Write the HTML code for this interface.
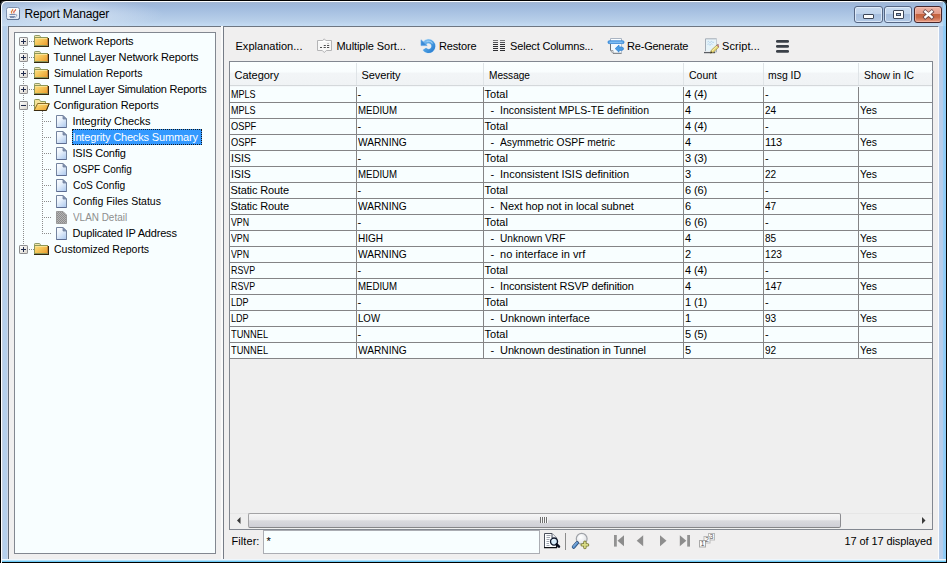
<!DOCTYPE html>
<html>
<head>
<meta charset="utf-8">
<title>Report Manager</title>
<style>
html,body{margin:0;padding:0;}
body{width:947px;height:563px;overflow:hidden;position:relative;background:#000;font-family:"Liberation Sans",sans-serif;font-size:11px;color:#000;}
.abs{position:absolute;}
#win{position:absolute;left:0;top:0;width:947px;height:563px;background:#b7cfe9;overflow:hidden;}
#frameL{left:0;top:26px;width:8px;height:537px;background:linear-gradient(to right,#000 0,#000 1px,#fbfdff 1px,#fbfdff 2px,#c6d1e2 2px,#c6d1e2 3px,#b4d0ee 3px,#b6d0ec 7px,#cdd8ea 7px,#cdd8ea 8px);}
#frameR{left:938px;top:26px;width:9px;height:537px;background:linear-gradient(to right,#b9cde9 0,#b9cde9 1px,#b9cde9 1px,#b4cbea 5px,#93cdf6 5px,#8ccaf6 8px,#000 8px,#000 9px);}
#title{left:0;top:0;width:947px;height:26px;background:linear-gradient(to bottom,#000 0,#000 1px,#fbfdff 1px,#fbfdff 2px,#a4b6d1 2px,#9eb7d9 4px,#a0badd 7px,#aac3e3 13px,#b8cfe9 21px,#c5dcf3 26px);}
#titleglow{left:2px;top:2px;width:200px;height:24px;background:radial-gradient(ellipse 100px 16px at 62px 12px,rgba(232,240,250,.7),rgba(232,240,250,0));}
#frameB{left:0;top:559px;width:947px;height:4px;background:linear-gradient(to bottom,#eef6fc 0,#eef6fc 1px,#b6e1f8 1px,#b6e1f8 2px,#6ccaf6 2px,#6ccaf6 3px,#000 3px,#000 4px);}
#content{left:8px;top:26px;width:930px;height:533px;background:#f0efef;}
.t{position:absolute;white-space:pre;line-height:14px;height:14px;transform-origin:0 0;}
.vdot{width:1px;background:repeating-linear-gradient(to bottom,#8c8c8c 0,#8c8c8c 1px,transparent 1px,transparent 2px);}
.hdot{height:1px;background:repeating-linear-gradient(to right,#8c8c8c 0,#8c8c8c 1px,transparent 1px,transparent 2px);}
.cbtn{border:1px solid #566684;border-radius:3px;background:linear-gradient(to bottom,#c9dbf0 0,#bfd3ec 48%,#a7bfdf 50%,#b2c9e6 100%);box-shadow:inset 0 0 0 1px rgba(232,242,252,.75);}
#frame{left:0;top:0;width:945px;height:580px;border:1px solid #000;border-radius:6px 6px 0 0;box-shadow:0 0 0 12px #000,inset 1px 1px 0 0 #fbfdff;pointer-events:none;}

</style>
</head>
<body>
<svg width="0" height="0" style="position:absolute">
<defs>
<linearGradient id="gbox" x1="0" y1="0" x2="1" y2="1"><stop offset="0" stop-color="#ffffff"/><stop offset="1" stop-color="#d9d5cc"/></linearGradient>
<linearGradient id="gfold" x1="0" y1="0" x2="1" y2="0.8"><stop offset="0" stop-color="#fbe089"/><stop offset="0.45" stop-color="#f6c95c"/><stop offset="1" stop-color="#eca233"/></linearGradient>
<linearGradient id="gfile" x1="0" y1="0" x2="0.7" y2="1"><stop offset="0" stop-color="#ffffff"/><stop offset="0.45" stop-color="#e9f2fc"/><stop offset="1" stop-color="#b5cff0"/></linearGradient>
<linearGradient id="grest" x1="0" y1="0" x2="1" y2="1"><stop offset="0" stop-color="#7dbdf0"/><stop offset="0.5" stop-color="#4a9ce0"/><stop offset="1" stop-color="#2b7fd2"/></linearGradient>
<radialGradient id="glens" cx="0.4" cy="0.35" r="0.7"><stop offset="0" stop-color="#ffffff"/><stop offset="1" stop-color="#dcdfe4"/></radialGradient>
<symbol id="plus" viewBox="0 0 9 9"><rect x="0.5" y="0.5" width="8" height="8" rx="0.6" fill="url(#gbox)" stroke="#8e8e90"/><path d="M2 4.5H7M4.5 2V7" stroke="#1f2b4d" stroke-width="1"/></symbol>
<symbol id="minus" viewBox="0 0 9 9"><rect x="0.5" y="0.5" width="8" height="8" rx="0.6" fill="url(#gbox)" stroke="#8e8e90"/><path d="M2 4.5H7" stroke="#1f2b4d" stroke-width="1"/></symbol>
<symbol id="fclosed" viewBox="0 0 17 16">
 <path d="M1.5 4.5 V3.2 Q1.5 2.5 2.2 2.5 H6.3 Q7 2.5 7.2 3.2 L7.6 4.5 Z" fill="#f3e7ac" stroke="#8f9a68" stroke-width="1"/>
 <rect x="1.5" y="4.5" width="13" height="8" fill="url(#gfold)" stroke="#8d9858" stroke-width="1"/>
 <path d="M2.5 5.5 H14" stroke="#fbe9a0" stroke-width="1" opacity="0.8"/>
 <path d="M14.5 5 V12.5" stroke="#c8863a" stroke-width="1"/>
 <path d="M1 13.5 H16 M15.5 5 V14" fill="none" stroke="#33280f" stroke-width="1"/>
</symbol>
<symbol id="fopen" viewBox="0 0 17 16">
 <path d="M1.5 13 V3.3 Q1.5 2.5 2.3 2.5 H6.3 L7.6 4.5 H12.5 V7" fill="#f4e49c" stroke="#8d9858" stroke-width="1"/>
 <path d="M4.6 6.5 H16.2 L13.2 13.5 H1.2 Z" fill="url(#gfold)" stroke="#8a6a24" stroke-width="1" stroke-linejoin="round"/>
 <path d="M5.2 7.5 H14.8" stroke="#fdeeb4" stroke-width="1" opacity="0.8"/>
 <path d="M1 13.5 H13.4 L16.2 6.8" fill="none" stroke="#3a2c10" stroke-width="1"/>
</symbol>
<symbol id="file" viewBox="0 0 14 16">
 <path d="M1.5 2.5 H8 L11.5 6 V14.5 H1.5 Z" fill="url(#gfile)" stroke="#74849f" stroke-width="1"/>
 <path d="M8 2.5 V6 H11.5 Z" fill="#7f90b0" stroke="#74849f" stroke-width="0.8"/>
 <path d="M1.5 14.5 H11.5" stroke="#5c6c92" stroke-width="1"/>
</symbol>
<pattern id="hatch" width="2" height="2" patternUnits="userSpaceOnUse"><rect width="2" height="2" fill="#b5b5b5"/><rect width="1" height="1" fill="#8d8d8d"/><rect x="1" y="1" width="1" height="1" fill="#8d8d8d"/></pattern>
<symbol id="fdis" viewBox="0 0 14 16">
 <path d="M1.5 2.5 H8 L11.5 6 V14.5 H1.5 Z" fill="url(#hatch)" stroke="#9a9a9a" stroke-width="1"/>
</symbol>
<symbol id="isort" viewBox="0 0 17 16">
 <path d="M1.5 2.5 H6.8 L8.3 0.8 L9.8 2.5 H15.5 V12.5 H10.3 L8.3 14.6 L6.3 12.5 H1.5 Z" fill="#f7f7f7" stroke="#b4b4b6" stroke-width="1" stroke-linejoin="round"/>
 <path d="M2.5 3.5 H14.5" stroke="#ffffff"/>
 <path d="M4 9.5H6M7.6 9.5H9.8M11 9.5H13.2M7.8 7.5H9.8M11 7.5H13.2" stroke="#4e4e50" stroke-width="1.1"/>
 <path d="M11.4 5.5H12.8" stroke="#a8a8aa" stroke-width="1"/>
</symbol>
<symbol id="irestore" viewBox="0 0 16 16">
 <path d="M4.6 5.2 A4.9 4.9 0 1 1 4.4 10.9" fill="none" stroke="#d4e8f8" stroke-width="5"/>
 <path d="M4.6 5.2 A4.9 4.9 0 1 1 4.4 10.9" fill="none" stroke="url(#grest)" stroke-width="3.9"/>
 <path d="M6.5 3.6 A4.9 4.9 0 0 1 12.6 5.5" fill="none" stroke="#9fd0f6" stroke-width="1.2" opacity="0.9"/>
 <path d="M1 1.8 L1 7.6 L7.2 7.6 Z" fill="#3b8bd8" stroke="#5aa4e6" stroke-width="0.6"/>
</symbol>
<symbol id="icols" viewBox="0 0 13 12">
 <path d="M0 0.5H5M7 0.5H12" stroke="#77777a" stroke-width="1"/>
 <path d="M0 2.5H5M7 2.5H12" stroke="#55555a" stroke-width="1"/>
 <path d="M0 4.5H5M0 6.5H5M0 8.5H5M0 10.5H5M7 4.5H12M7 6.5H12M7 8.5H12M7 10.5H12" stroke="#2e2e32" stroke-width="1"/>
</symbol>
<symbol id="iregen" viewBox="0 0 18 16">
 <path d="M3.5 3 V0.5 H14.5 V3" fill="#fafdff" stroke="#aab4c2"/>
 <rect x="1" y="2.8" width="16" height="2.8" rx="1.2" fill="#4f9fe6" stroke="#3584d6" stroke-width="0.8"/>
 <path d="M2.5 4.2 H15.5" stroke="#9fd0f8" stroke-width="0.9"/>
 <path d="M3.5 6 V12.5 L6 15.3 H14.5 V6" fill="#f3f9fe" stroke="#6d7075" stroke-width="1"/>
 <path d="M14.5 6 V15.3" stroke="#b8c2d0" stroke-width="1"/>
 <path d="M3.7 12.5 H6 V15" fill="#ffffff" stroke="#8a8d92" stroke-width="0.8"/>
 <path d="M8.2 10.6 L12 7 V9 H14.6 Q16.6 9.2 16.6 10.8 Q16.4 12.4 14.4 12.4 H12 V14.2 Z" fill="#4a9ce4" stroke="#2f7fd0" stroke-width="0.7" stroke-linejoin="round"/>
</symbol>
<symbol id="iscript" viewBox="0 0 16 16">
 <path d="M2.5 0.8 H13.5 V14 H2.5 Z" fill="#e6f3f9" stroke="#a4acb6" stroke-width="1"/>
 <path d="M13.5 1 V9" stroke="#c4ccd6"/>
 <path d="M4.5 4 q1 -1.5 1.6 0 t1.6 0 t1.6 0 t1.6 0 M4.5 6.5 q1 -1.5 1.6 0 t1.6 0 t1.6 0" fill="none" stroke="#a9cdea" stroke-width="0.9"/>
 <path d="M1 14.5 H12" stroke="#4e5258" stroke-width="1.4"/>
 <path d="M1.3 13.6 H8" stroke="#ffffff" stroke-width="0.8"/>
 <path d="M7.3 15.2 L8.4 12 L14 7 L16 9 L10.4 14.2 Z" fill="#e8d774" stroke="#9a8a3a" stroke-width="0.6"/>
 <path d="M9.2 12.8 L14.6 7.8" stroke="#fbf3b4" stroke-width="0.9"/>
 <path d="M13.8 7.2 L15 6.2 L16.6 8 L15.6 9 Z" fill="#e89aa0" stroke="#5a4a4a" stroke-width="0.5"/>
 <path d="M7.3 15.2 L8 13.2 L9.2 14.5 Z" fill="#15151a"/>
</symbol>
<symbol id="iburger" viewBox="0 0 14 13">
 <rect x="0" y="0" width="13" height="2.8" rx="1.3" fill="#3b4048"/>
 <rect x="0" y="5" width="13" height="2.8" rx="1.3" fill="#3b4048"/>
 <rect x="0" y="10" width="13" height="2.8" rx="1.3" fill="#3b4048"/>
</symbol>
<symbol id="ifind" viewBox="0 0 18 17">
 <path d="M1.5 1.5 H9 L13.5 6 V15.5 H1.5 Z" fill="#fdfeff" stroke="#4a4f5a"/>
 <path d="M9 1.5 V6 H13.5" fill="#eef1f6" stroke="#4a4f5a"/>
 <path d="M1 15.7 H14 M13.6 6.5 V16" stroke="#0c0c10" stroke-width="1.3"/>
 <path d="M3.5 3.5H7.5M3.5 5.5H7M3.5 7.5H6.5M3.5 9.5H6M3.5 11.5H6M3.5 13.5H6.5" stroke="#a0a6b0"/>
 <circle cx="11" cy="9.6" r="3.5" fill="#d6ebf9" stroke="#0d1428" stroke-width="1.4"/>
 <path d="M9.3 8.6 Q10 7.4 11.3 7.4" fill="none" stroke="#ffffff" stroke-width="0.9"/>
 <path d="M13.7 12.4 L16 14.7" stroke="#080c1c" stroke-width="2.5" stroke-linecap="round"/>
</symbol>
<symbol id="izoom" viewBox="0 0 19 18">
 <circle cx="10.7" cy="6.8" r="5.4" fill="url(#glens)" stroke="#9fa2a8" stroke-width="1.2"/>
 <path d="M6.2 10.8 L2.6 15" stroke="#2c4f7c" stroke-width="3.6" stroke-linecap="round"/>
 <path d="M6.2 10.8 L2.6 15" stroke="#5b93cf" stroke-width="2" stroke-linecap="round"/>
 <path d="M5.6 10.6 L2.4 14.2" stroke="#a9cdf0" stroke-width="0.7" stroke-linecap="round"/>
 <path d="M13.9 10.2 V15.6 M11.2 12.9 H16.6" stroke="#7f7f38" stroke-width="3.4" stroke-linecap="round"/>
 <path d="M13.9 10.4 V15.4 M11.4 12.9 H16.4" stroke="#d9dc86" stroke-width="1.7" stroke-linecap="round"/>
</symbol>
<symbol id="i123" viewBox="0 0 17 16">
 <rect x="9.5" y="1.5" width="6" height="6.5" fill="#fbfbfb" stroke="#b9b9b9"/>
 <rect x="5" y="4.5" width="6" height="6.5" fill="#fbfbfb" stroke="#b9b9b9"/>
 <rect x="0.5" y="8.5" width="6" height="6.5" fill="#fbfbfb" stroke="#a9a9a9"/>
 <text x="10.7" y="7.3" font-family="Liberation Sans, sans-serif" font-size="6.5" fill="#5a5a5a">3</text>
 <text x="6.2" y="10.3" font-family="Liberation Sans, sans-serif" font-size="6.5" fill="#5a5a5a">2</text>
 <text x="1.7" y="14.3" font-family="Liberation Sans, sans-serif" font-size="6.5" fill="#4a4a4a">1</text>
</symbol>
</defs>
</svg>

<div id="win">
<div id="title" class="abs"></div>
<div id="titleglow" class="abs"></div>
<div id="frameL" class="abs"></div>
<div id="frameR" class="abs"></div>
<div id="frameB" class="abs"></div>
<div id="content" class="abs"></div>
<svg class="abs" style="left:5px;top:6px" width="16" height="15" viewBox="0 0 16 15">
 <defs><linearGradient id="gjava" x1="0" y1="0" x2="0" y2="1"><stop offset="0" stop-color="#ffffff"/><stop offset="1" stop-color="#dfe7f3"/></linearGradient></defs>
 <rect x="1.5" y="1.5" width="13" height="12" rx="2" fill="url(#gjava)" stroke="#7f93b2"/>
 <path d="M2 13.5 H13 Q14.5 13.5 14.5 12 V4" fill="none" stroke="#5f7394" stroke-width="1"/>
 <path d="M7.2 7.6 Q5.6 6.2 7 5 Q8.2 4 7.6 3" fill="none" stroke="#e2803a" stroke-width="1.1"/>
 <path d="M9.3 7.4 Q8 6 9.6 5 Q11 4.2 10.4 3.2" fill="none" stroke="#d9523a" stroke-width="1.1"/>
 <path d="M4.5 8.5 H10.5 M4.5 10.5 H10 M5 11.5 H9.5" stroke="#7f8fb0" stroke-width="1"/>
 <path d="M10.5 8.5 Q12.8 8.5 11.5 10.2 L10 11.5" fill="none" stroke="#8c9bb8" stroke-width="0.9"/>
</svg>
<span class="abs" style="left:24.5px;top:6px;font-size:12px;line-height:16px;white-space:pre;letter-spacing:-0.15px;">Report Manager</span>
<!-- caption buttons -->
<div class="abs cbtn" style="left:854px;top:6px;width:27px;height:15px;"></div>
<div class="abs" style="left:863px;top:14px;width:9px;height:3px;border:1px solid #3d4658;background:#fdfdfd;border-radius:1px;"></div>
<div class="abs cbtn" style="left:884px;top:6px;width:26px;height:15px;"></div>
<div class="abs" style="left:893px;top:10px;width:9px;height:7px;border:1px solid #3d4658;background:#fdfdfd;border-radius:1px;"></div>
<div class="abs" style="left:896px;top:13px;width:3px;height:1px;border:1px solid #3d4658;background:#9fb6d6;"></div>
<div class="abs" style="left:914px;top:6px;width:26px;height:15px;border:1px solid #46262c;border-radius:3px;background:linear-gradient(to bottom,#ecb4a6 0,#e39a88 46%,#c4623f 50%,#c96a48 70%,#e89c84 100%);box-shadow:inset 0 0 0 1px rgba(255,205,190,.5);"></div>
<svg class="abs" style="left:922px;top:9px" width="13" height="11" viewBox="0 0 13 11"><path d="M3.3 2.7 L9.7 8.2 M9.7 2.7 L3.3 8.2" stroke="#5a3c40" stroke-width="3.9" stroke-linecap="square" opacity="0.85"/><path d="M3.3 2.7 L9.7 8.2 M9.7 2.7 L3.3 8.2" stroke="#ffffff" stroke-width="2.3" stroke-linecap="square"/></svg>
<div class="abs" style="left:938px;top:27px;width:1px;height:532px;background:#fbfdff;"></div>
<div class="abs" style="left:943px;top:2px;width:3px;height:24px;background:linear-gradient(to right,#a6d4f5,#93cdf6);"></div>
<div id="frame" class="abs"></div>

<div class="abs" style="left:14px;top:32px;width:200px;height:520px;border:1px solid #828790;background:#f8feff;"></div>
<div class="abs vdot" style="left:23px;top:47px;height:198px;"></div>
<div class="abs vdot" style="left:42px;top:111px;height:123px;"></div>
<div class="abs hdot" style="left:29px;top:41px;width:5px;"></div>
<svg class="abs" style="left:19px;top:37px" width="9" height="9" viewBox="0 0 9 9"><use href="#plus"/></svg>
<svg class="abs" style="left:33px;top:33px" width="17" height="16" viewBox="0 0 17 16"><use href="#fclosed"/></svg>
<span class="t" style="left:53.5px;top:34px;letter-spacing:-0.128px;">Network Reports</span>
<div class="abs hdot" style="left:29px;top:57px;width:5px;"></div>
<svg class="abs" style="left:19px;top:53px" width="9" height="9" viewBox="0 0 9 9"><use href="#plus"/></svg>
<svg class="abs" style="left:33px;top:49px" width="17" height="16" viewBox="0 0 17 16"><use href="#fclosed"/></svg>
<span class="t" style="left:53.5px;top:50px;letter-spacing:-0.135px;">Tunnel Layer Network Reports</span>
<div class="abs hdot" style="left:29px;top:73px;width:5px;"></div>
<svg class="abs" style="left:19px;top:69px" width="9" height="9" viewBox="0 0 9 9"><use href="#plus"/></svg>
<svg class="abs" style="left:33px;top:65px" width="17" height="16" viewBox="0 0 17 16"><use href="#fclosed"/></svg>
<span class="t" style="left:53.5px;top:66px;transform:scaleX(0.9512);">Simulation Reports</span>
<div class="abs hdot" style="left:29px;top:89px;width:5px;"></div>
<svg class="abs" style="left:19px;top:85px" width="9" height="9" viewBox="0 0 9 9"><use href="#plus"/></svg>
<svg class="abs" style="left:33px;top:81px" width="17" height="16" viewBox="0 0 17 16"><use href="#fclosed"/></svg>
<span class="t" style="left:53.5px;top:82px;letter-spacing:-0.219px;">Tunnel Layer Simulation Reports</span>
<div class="abs hdot" style="left:29px;top:105px;width:5px;"></div>
<svg class="abs" style="left:19px;top:101px" width="9" height="9" viewBox="0 0 9 9"><use href="#minus"/></svg>
<svg class="abs" style="left:33px;top:97px" width="17" height="16" viewBox="0 0 17 16"><use href="#fopen"/></svg>
<span class="t" style="left:53.5px;top:98px;letter-spacing:-0.091px;">Configuration Reports</span>
<div class="abs hdot" style="left:44px;top:121px;width:7px;"></div>
<svg class="abs" style="left:55px;top:113px" width="14" height="16" viewBox="0 0 14 16"><use href="#file"/></svg>
<span class="t" style="left:72.5px;top:114px;letter-spacing:-0.061px;">Integrity Checks</span>
<div class="abs hdot" style="left:44px;top:137px;width:7px;"></div>
<svg class="abs" style="left:55px;top:129px" width="14" height="16" viewBox="0 0 14 16"><use href="#file"/></svg>
<div class="abs" style="left:72px;top:129px;width:128px;height:14px;background:#3399ff;border:1px dotted #17181a;"></div>
<span class="t" style="left:72.5px;top:130px;letter-spacing:-0.154px;color:#fff;">Integrity Checks Summary</span>
<div class="abs hdot" style="left:44px;top:153px;width:7px;"></div>
<svg class="abs" style="left:55px;top:145px" width="14" height="16" viewBox="0 0 14 16"><use href="#file"/></svg>
<span class="t" style="left:72.5px;top:146px;letter-spacing:-0.222px;">ISIS Config</span>
<div class="abs hdot" style="left:44px;top:169px;width:7px;"></div>
<svg class="abs" style="left:55px;top:161px" width="14" height="16" viewBox="0 0 14 16"><use href="#file"/></svg>
<span class="t" style="left:72.5px;top:162px;transform:scaleX(0.9088);">OSPF Config</span>
<div class="abs hdot" style="left:44px;top:185px;width:7px;"></div>
<svg class="abs" style="left:55px;top:177px" width="14" height="16" viewBox="0 0 14 16"><use href="#file"/></svg>
<span class="t" style="left:72.5px;top:178px;transform:scaleX(0.9295);">CoS Config</span>
<div class="abs hdot" style="left:44px;top:201px;width:7px;"></div>
<svg class="abs" style="left:55px;top:193px" width="14" height="16" viewBox="0 0 14 16"><use href="#file"/></svg>
<span class="t" style="left:72.5px;top:194px;transform:scaleX(0.9520);">Config Files Status</span>
<div class="abs hdot" style="left:44px;top:217px;width:7px;"></div>
<svg class="abs" style="left:55px;top:209px" width="14" height="16" viewBox="0 0 14 16"><use href="#fdis"/></svg>
<span class="t" style="left:72.5px;top:210px;transform:scaleX(0.9028);color:#8e8e8e;">VLAN Detail</span>
<div class="abs hdot" style="left:44px;top:233px;width:7px;"></div>
<svg class="abs" style="left:55px;top:225px" width="14" height="16" viewBox="0 0 14 16"><use href="#file"/></svg>
<span class="t" style="left:72.5px;top:226px;letter-spacing:-0.182px;">Duplicated IP Address</span>
<div class="abs hdot" style="left:29px;top:249px;width:5px;"></div>
<svg class="abs" style="left:19px;top:245px" width="9" height="9" viewBox="0 0 9 9"><use href="#plus"/></svg>
<svg class="abs" style="left:33px;top:241px" width="17" height="16" viewBox="0 0 17 16"><use href="#fclosed"/></svg>
<span class="t" style="left:53.5px;top:242px;transform:scaleX(0.9543);">Customized Reports</span>
<div class="abs" style="left:8px;top:26px;width:930px;height:1px;background:#6e7681;"></div>
<div class="abs" style="left:8px;top:26px;width:1px;height:533px;background:#646c78;"></div>
<div class="abs" style="left:221px;top:26px;width:2px;height:533px;background:#fafafa;"></div>
<div class="abs" style="left:223px;top:26px;width:1px;height:533px;background:#767c86;"></div>
<span class="t" style="left:235.5px;top:39px;letter-spacing:0.025px;">Explanation...</span>
<svg class="abs" style="left:316px;top:38px" width="17" height="16" viewBox="0 0 17 16"><use href="#isort"/></svg>
<span class="t" style="left:336.5px;top:39px;letter-spacing:-0.070px;">Multiple Sort...</span>
<svg class="abs" style="left:420px;top:38px" width="16" height="16" viewBox="0 0 16 16"><use href="#irestore"/></svg>
<span class="t" style="left:438.9px;top:39px;letter-spacing:-0.133px;">Restore</span>
<svg class="abs" style="left:493px;top:40px" width="13" height="12" viewBox="0 0 13 12"><use href="#icols"/></svg>
<span class="t" style="left:510.1px;top:39px;letter-spacing:-0.188px;">Select Columns...</span>
<svg class="abs" style="left:607px;top:38px" width="18" height="16" viewBox="0 0 18 16"><use href="#iregen"/></svg>
<span class="t" style="left:627.1px;top:39px;letter-spacing:-0.227px;">Re-Generate</span>
<svg class="abs" style="left:703px;top:38px" width="16" height="16" viewBox="0 0 16 16"><use href="#iscript"/></svg>
<span class="t" style="left:722px;top:39px;letter-spacing:0.078px;">Script...</span>
<svg class="abs" style="left:776px;top:40px" width="14" height="13" viewBox="0 0 14 13"><use href="#iburger"/></svg>
<div class="abs" style="left:229px;top:61px;width:702px;height:467px;border:1px solid #828790;background:#efefef;"></div>
<div class="abs" style="left:230px;top:62px;width:702px;height:23px;background:linear-gradient(to bottom,#fbffff 0,#f9fdfe 42%,#f2f5f7 50%,#f0f3f5 100%);border-bottom:1px solid #d4d8db;"></div>
<div class="abs" style="left:230px;top:86px;width:702px;height:1px;background:#f4f8fa;"></div>
<div class="abs" style="left:356px;top:63px;width:1px;height:22px;background:#dfe4e7;"></div>
<div class="abs" style="left:483px;top:63px;width:1px;height:22px;background:#dfe4e7;"></div>
<div class="abs" style="left:683px;top:63px;width:1px;height:22px;background:#dfe4e7;"></div>
<div class="abs" style="left:763px;top:63px;width:1px;height:22px;background:#dfe4e7;"></div>
<div class="abs" style="left:858px;top:63px;width:1px;height:22px;background:#dfe4e7;"></div>
<span class="t" style="left:234.5px;top:68px;letter-spacing:-0.018px;">Category</span>
<span class="t" style="left:361.5px;top:68px;letter-spacing:-0.094px;">Severity</span>
<span class="t" style="left:488.5px;top:68px;transform:scaleX(0.9184);">Message</span>
<span class="t" style="left:688.5px;top:68px;transform:scaleX(0.9537);">Count</span>
<span class="t" style="left:767.5px;top:68px;transform:scaleX(0.9471);">msg ID</span>
<span class="t" style="left:863.5px;top:68px;transform:scaleX(0.9398);">Show in IC</span>
<div class="abs" style="left:230px;top:87px;width:702px;height:272px;background:#f8feff;"></div>
<div class="abs" style="left:356px;top:87px;width:1px;height:272px;background:#848486;"></div>
<div class="abs" style="left:483px;top:87px;width:1px;height:272px;background:#848486;"></div>
<div class="abs" style="left:683px;top:87px;width:1px;height:272px;background:#848486;"></div>
<div class="abs" style="left:763px;top:87px;width:1px;height:272px;background:#848486;"></div>
<div class="abs" style="left:858px;top:87px;width:1px;height:272px;background:#848486;"></div>
<div class="abs" style="left:230px;top:102px;width:702px;height:1px;background:#848486;"></div>
<span class="t" style="left:230.5px;top:87px;transform:scaleX(0.8209);">MPLS</span>
<span class="t" style="left:357.5px;top:87px;">-</span>
<span class="t" style="left:484.5px;top:87px;letter-spacing:0.030px;">Total</span>
<span class="t" style="left:685.1px;top:87px;letter-spacing:-0.145px;">4 (4)</span>
<span class="t" style="left:765.1px;top:87px;">-</span>
<div class="abs" style="left:230px;top:118px;width:702px;height:1px;background:#848486;"></div>
<span class="t" style="left:230.5px;top:103px;transform:scaleX(0.8209);">MPLS</span>
<span class="t" style="left:357.5px;top:103px;transform:scaleX(0.8765);">MEDIUM</span>
<span class="t" style="left:490.5px;top:103px;">-</span>
<span class="t" style="left:500.1px;top:103px;transform:scaleX(0.9519);">Inconsistent MPLS-TE definition</span>
<span class="t" style="left:685.1px;top:103px;">4</span>
<span class="t" style="left:765.1px;top:103px;transform:scaleX(0.9143);">24</span>
<span class="t" style="left:860.1px;top:103px;transform:scaleX(0.9413);">Yes</span>
<div class="abs" style="left:230px;top:134px;width:702px;height:1px;background:#848486;"></div>
<span class="t" style="left:230.5px;top:119px;transform:scaleX(0.8447);">OSPF</span>
<span class="t" style="left:357.5px;top:119px;">-</span>
<span class="t" style="left:484.5px;top:119px;letter-spacing:0.030px;">Total</span>
<span class="t" style="left:685.1px;top:119px;letter-spacing:-0.145px;">4 (4)</span>
<span class="t" style="left:765.1px;top:119px;">-</span>
<div class="abs" style="left:230px;top:150px;width:702px;height:1px;background:#848486;"></div>
<span class="t" style="left:230.5px;top:135px;transform:scaleX(0.8447);">OSPF</span>
<span class="t" style="left:357.5px;top:135px;transform:scaleX(0.9248);">WARNING</span>
<span class="t" style="left:490.5px;top:135px;">-</span>
<span class="t" style="left:500.1px;top:135px;transform:scaleX(0.9331);">Asymmetric OSPF metric</span>
<span class="t" style="left:685.1px;top:135px;">4</span>
<span class="t" style="left:765.1px;top:135px;letter-spacing:-0.216px;">113</span>
<span class="t" style="left:860.1px;top:135px;transform:scaleX(0.9413);">Yes</span>
<div class="abs" style="left:230px;top:166px;width:702px;height:1px;background:#848486;"></div>
<span class="t" style="left:230.5px;top:151px;transform:scaleX(0.9521);">ISIS</span>
<span class="t" style="left:357.5px;top:151px;">-</span>
<span class="t" style="left:484.5px;top:151px;letter-spacing:0.030px;">Total</span>
<span class="t" style="left:685.1px;top:151px;letter-spacing:-0.145px;">3 (3)</span>
<span class="t" style="left:765.1px;top:151px;">-</span>
<div class="abs" style="left:230px;top:182px;width:702px;height:1px;background:#848486;"></div>
<span class="t" style="left:230.5px;top:167px;transform:scaleX(0.9521);">ISIS</span>
<span class="t" style="left:357.5px;top:167px;transform:scaleX(0.8765);">MEDIUM</span>
<span class="t" style="left:490.5px;top:167px;">-</span>
<span class="t" style="left:500.1px;top:167px;letter-spacing:-0.026px;">Inconsistent ISIS definition</span>
<span class="t" style="left:685.1px;top:167px;">3</span>
<span class="t" style="left:765.1px;top:167px;transform:scaleX(0.9143);">22</span>
<span class="t" style="left:860.1px;top:167px;transform:scaleX(0.9413);">Yes</span>
<div class="abs" style="left:230px;top:198px;width:702px;height:1px;background:#848486;"></div>
<span class="t" style="left:230.5px;top:183px;letter-spacing:-0.127px;">Static Route</span>
<span class="t" style="left:357.5px;top:183px;">-</span>
<span class="t" style="left:484.5px;top:183px;letter-spacing:0.030px;">Total</span>
<span class="t" style="left:685.1px;top:183px;letter-spacing:-0.145px;">6 (6)</span>
<span class="t" style="left:765.1px;top:183px;">-</span>
<div class="abs" style="left:230px;top:214px;width:702px;height:1px;background:#848486;"></div>
<span class="t" style="left:230.5px;top:199px;letter-spacing:-0.127px;">Static Route</span>
<span class="t" style="left:357.5px;top:199px;transform:scaleX(0.9248);">WARNING</span>
<span class="t" style="left:490.5px;top:199px;">-</span>
<span class="t" style="left:500.1px;top:199px;letter-spacing:-0.077px;">Next hop not in local subnet</span>
<span class="t" style="left:685.1px;top:199px;">6</span>
<span class="t" style="left:765.1px;top:199px;transform:scaleX(0.9143);">47</span>
<span class="t" style="left:860.1px;top:199px;transform:scaleX(0.9413);">Yes</span>
<div class="abs" style="left:230px;top:230px;width:702px;height:1px;background:#848486;"></div>
<span class="t" style="left:230.5px;top:215px;transform:scaleX(0.8000);">VPN</span>
<span class="t" style="left:357.5px;top:215px;">-</span>
<span class="t" style="left:484.5px;top:215px;letter-spacing:0.030px;">Total</span>
<span class="t" style="left:685.1px;top:215px;letter-spacing:-0.145px;">6 (6)</span>
<span class="t" style="left:765.1px;top:215px;">-</span>
<div class="abs" style="left:230px;top:246px;width:702px;height:1px;background:#848486;"></div>
<span class="t" style="left:230.5px;top:231px;transform:scaleX(0.8000);">VPN</span>
<span class="t" style="left:357.5px;top:231px;transform:scaleX(0.9127);">HIGH</span>
<span class="t" style="left:490.5px;top:231px;">-</span>
<span class="t" style="left:500.1px;top:231px;transform:scaleX(0.9221);">Unknown VRF</span>
<span class="t" style="left:685.1px;top:231px;">4</span>
<span class="t" style="left:765.1px;top:231px;transform:scaleX(0.9143);">85</span>
<span class="t" style="left:860.1px;top:231px;transform:scaleX(0.9413);">Yes</span>
<div class="abs" style="left:230px;top:262px;width:702px;height:1px;background:#848486;"></div>
<span class="t" style="left:230.5px;top:247px;transform:scaleX(0.8000);">VPN</span>
<span class="t" style="left:357.5px;top:247px;transform:scaleX(0.9248);">WARNING</span>
<span class="t" style="left:490.5px;top:247px;">-</span>
<span class="t" style="left:500.1px;top:247px;letter-spacing:0.049px;">no interface in vrf</span>
<span class="t" style="left:685.1px;top:247px;">2</span>
<span class="t" style="left:765.1px;top:247px;transform:scaleX(0.9205);">123</span>
<span class="t" style="left:860.1px;top:247px;transform:scaleX(0.9413);">Yes</span>
<div class="abs" style="left:230px;top:278px;width:702px;height:1px;background:#848486;"></div>
<span class="t" style="left:230.5px;top:263px;transform:scaleX(0.8042);">RSVP</span>
<span class="t" style="left:357.5px;top:263px;">-</span>
<span class="t" style="left:484.5px;top:263px;letter-spacing:0.030px;">Total</span>
<span class="t" style="left:685.1px;top:263px;letter-spacing:-0.145px;">4 (4)</span>
<span class="t" style="left:765.1px;top:263px;">-</span>
<div class="abs" style="left:230px;top:294px;width:702px;height:1px;background:#848486;"></div>
<span class="t" style="left:230.5px;top:279px;transform:scaleX(0.8042);">RSVP</span>
<span class="t" style="left:357.5px;top:279px;transform:scaleX(0.8765);">MEDIUM</span>
<span class="t" style="left:490.5px;top:279px;">-</span>
<span class="t" style="left:500.1px;top:279px;letter-spacing:-0.179px;">Inconsistent RSVP definition</span>
<span class="t" style="left:685.1px;top:279px;">4</span>
<span class="t" style="left:765.1px;top:279px;transform:scaleX(0.9205);">147</span>
<span class="t" style="left:860.1px;top:279px;transform:scaleX(0.9413);">Yes</span>
<div class="abs" style="left:230px;top:310px;width:702px;height:1px;background:#848486;"></div>
<span class="t" style="left:230.5px;top:295px;transform:scaleX(0.8222);">LDP</span>
<span class="t" style="left:357.5px;top:295px;">-</span>
<span class="t" style="left:484.5px;top:295px;letter-spacing:0.030px;">Total</span>
<span class="t" style="left:685.1px;top:295px;letter-spacing:-0.145px;">1 (1)</span>
<span class="t" style="left:765.1px;top:295px;">-</span>
<div class="abs" style="left:230px;top:326px;width:702px;height:1px;background:#848486;"></div>
<span class="t" style="left:230.5px;top:311px;transform:scaleX(0.8222);">LDP</span>
<span class="t" style="left:357.5px;top:311px;transform:scaleX(0.8778);">LOW</span>
<span class="t" style="left:490.5px;top:311px;">-</span>
<span class="t" style="left:500.1px;top:311px;letter-spacing:-0.089px;">Unknown interface</span>
<span class="t" style="left:685.1px;top:311px;">1</span>
<span class="t" style="left:765.1px;top:311px;transform:scaleX(0.9143);">93</span>
<span class="t" style="left:860.1px;top:311px;transform:scaleX(0.9413);">Yes</span>
<div class="abs" style="left:230px;top:342px;width:702px;height:1px;background:#848486;"></div>
<span class="t" style="left:230.5px;top:327px;transform:scaleX(0.8429);">TUNNEL</span>
<span class="t" style="left:357.5px;top:327px;">-</span>
<span class="t" style="left:484.5px;top:327px;letter-spacing:0.030px;">Total</span>
<span class="t" style="left:685.1px;top:327px;letter-spacing:-0.145px;">5 (5)</span>
<span class="t" style="left:765.1px;top:327px;">-</span>
<div class="abs" style="left:230px;top:358px;width:702px;height:1px;background:#848486;"></div>
<span class="t" style="left:230.5px;top:343px;transform:scaleX(0.8429);">TUNNEL</span>
<span class="t" style="left:357.5px;top:343px;transform:scaleX(0.9248);">WARNING</span>
<span class="t" style="left:490.5px;top:343px;">-</span>
<span class="t" style="left:500.1px;top:343px;letter-spacing:-0.142px;">Unknown destination in Tunnel</span>
<span class="t" style="left:685.1px;top:343px;">5</span>
<span class="t" style="left:765.1px;top:343px;transform:scaleX(0.9143);">92</span>
<span class="t" style="left:860.1px;top:343px;transform:scaleX(0.9413);">Yes</span>
<div class="abs" style="left:230px;top:512px;width:702px;height:17px;background:#efefef;"></div>
<div class="abs" style="left:230px;top:513px;width:702px;height:1px;background:#e6e6e6;"></div>
<div class="abs" style="left:248px;top:513px;width:593px;height:15px;border:1px solid #a3a3a5;border-bottom-color:#858588;border-right-color:#8c8c90;border-radius:2px;background:linear-gradient(to bottom,#f6f6f6 0,#ececee 45%,#d9d9de 52%,#cfcfd6 100%);box-sizing:border-box;"></div>
<svg class="abs" style="left:236px;top:516px" width="5" height="9" viewBox="0 0 5 9"><path d="M4.5 1 L1 4.5 L4.5 8 Z" fill="#3a3a3a"/></svg>
<svg class="abs" style="left:921px;top:516px" width="5" height="9" viewBox="0 0 5 9"><path d="M1 1 L4.5 4.5 L1 8 Z" fill="#3a3a3a"/></svg>
<div class="abs" style="left:540px;top:517px;width:8px;height:6px;background:repeating-linear-gradient(to right,#707070 0,#707070 1px,#f8f8f8 1px,#f8f8f8 2px);"></div>
<span class="t" style="left:231.5px;top:534px;letter-spacing:0.071px;">Filter:</span>
<div class="abs" style="left:263px;top:530px;width:275px;height:22px;border:1px solid #abadb3;background:#f8feff;"></div>
<span class="t" style="left:266.5px;top:534px;">*</span>
<svg class="abs" style="left:543px;top:532px" width="18" height="17" viewBox="0 0 18 17"><use href="#ifind"/></svg>
<div class="abs" style="left:565px;top:533px;width:1px;height:17px;background:#8c8c8c;"></div>
<svg class="abs" style="left:571px;top:532px" width="19" height="18" viewBox="0 0 19 18"><use href="#izoom"/></svg>
<svg class="abs" style="left:613px;top:535px" width="12" height="12" viewBox="0 0 12 12"><rect x="1" y="0" width="2.8" height="11.6" fill="#929292"/><path d="M11 0.3 L4.5 5.8 L11 11.3 Z" fill="#8c8c8c"/></svg>
<svg class="abs" style="left:636px;top:535px" width="9" height="12" viewBox="0 0 9 12"><path d="M7.2 0.3 L0.7 5.8 L7.2 11.3 Z" fill="#8e8e8e"/></svg>
<svg class="abs" style="left:659px;top:535px" width="9" height="12" viewBox="0 0 9 12"><path d="M1 0.3 L7.5 5.8 L1 11.3 Z" fill="#8e8e8e"/></svg>
<svg class="abs" style="left:679px;top:535px" width="12" height="12" viewBox="0 0 12 12"><rect x="8.2" y="0" width="2.8" height="11.6" fill="#929292"/><path d="M0.8 0.3 L7.3 5.8 L0.8 11.3 Z" fill="#8c8c8c"/></svg>
<svg class="abs" style="left:699px;top:532px" width="17" height="16" viewBox="0 0 17 16"><use href="#i123"/></svg>
<span class="t" style="left:844.5px;top:534px;letter-spacing:-0.100px;">17 of 17 displayed</span>
</div>
</body>
</html>
